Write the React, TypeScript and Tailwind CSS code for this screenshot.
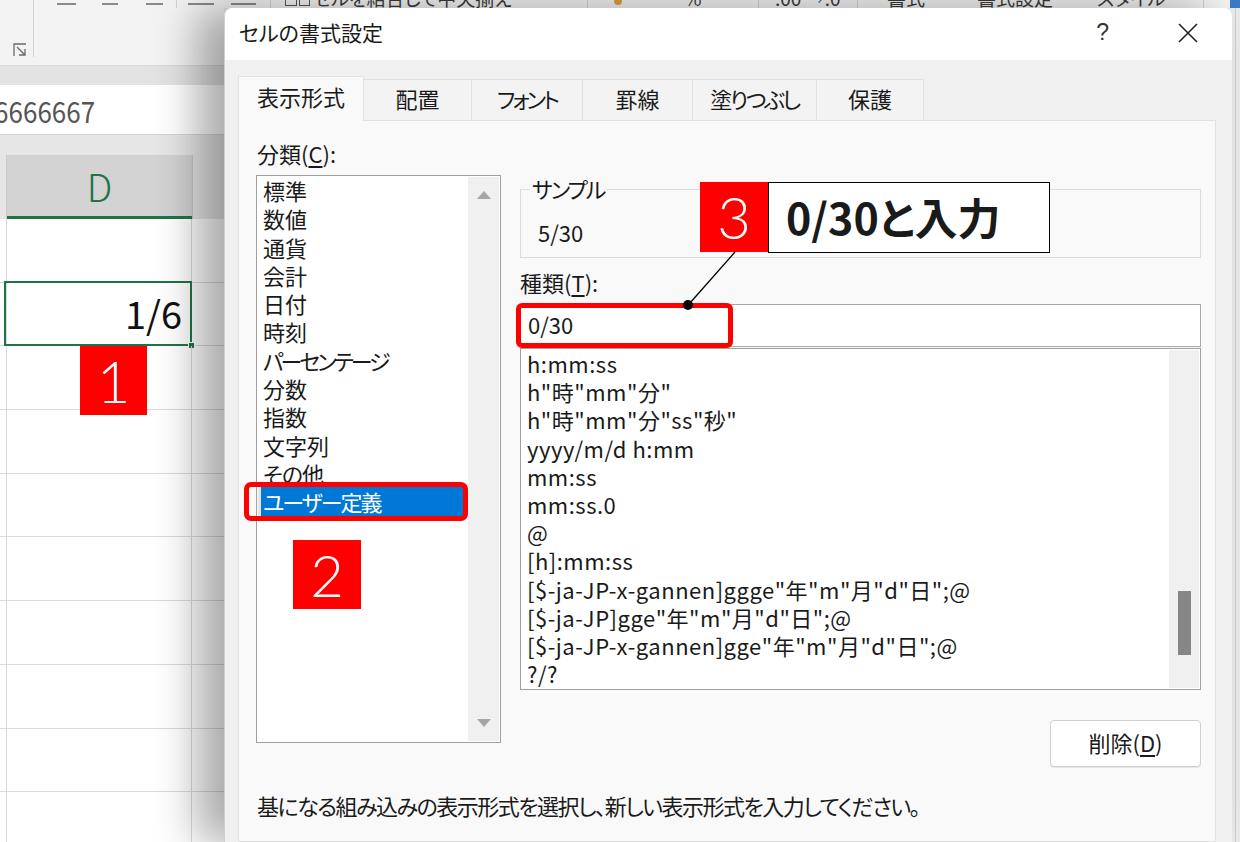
import React from "react";

const leftItems: { t: string; c: string }[] = [
  { t: "標準", c: "" },
  { t: "数値", c: "" },
  { t: "通貨", c: "" },
  { t: "会計", c: "" },
  { t: "日付", c: "" },
  { t: "時刻", c: "" },
  { t: "パーセンテージ", c: "tracking-[-3px]" },
  { t: "分数", c: "" },
  { t: "指数", c: "" },
  { t: "文字列", c: "" },
  { t: "その他", c: "tracking-[-1px]" },
];
const formats = [
  "h:mm:ss",
  'h"時"mm"分"',
  'h"時"mm"分"ss"秒"',
  "yyyy/m/d h:mm",
  "mm:ss",
  "mm:ss.0",
  "@",
  "[h]:mm:ss",
  '[$-ja-JP-x-gannen]ggge"年"m"月"d"日";@',
  '[$-ja-JP]gge"年"m"月"d"日";@',
  '[$-ja-JP-x-gannen]gge"年"m"月"d"日";@',
  "?/?",
];

const tabs: { label: string; w: string; c: string }[] = [
  { label: "配置", w: "w-[109px]", c: "" },
  { label: "フォント", w: "w-[112px]", c: "tracking-[-3px]" },
  { label: "罫線", w: "w-[111px]", c: "" },
  { label: "塗りつぶし", w: "w-[125px]", c: "tracking-[-2.5px]" },
  { label: "保護", w: "w-[108px]", c: "" },
];

function Sep() {
  return <div className="w-px h-full bg-[#d2d2d2] shrink-0" />;
}
function Under({ w }: { w: string }) {
  return (
    <div className={`${w} h-full flex items-start pt-[3px] shrink-0`}>
      <div className="w-full h-[2px] bg-[#8a8a8a]" />
    </div>
  );
}
function Sp({ w }: { w: string }) {
  return <div className={`${w} shrink-0`} />;
}
function RibText({ w, children }: { w: string; children: React.ReactNode }) {
  return (
    <div className={`${w} h-full flex items-end shrink-0 overflow-visible`}>
      <span className="text-[19px] leading-[20px] text-[#3a3a3a] whitespace-nowrap">{children}</span>
    </div>
  );
}

function TopStrip() {
  return (
    <div className="h-[8px] shrink-0 bg-[#f3f3f3] flex overflow-hidden">
      <Sp w="w-[33px]" />
      <Sep />
      <Sp w="w-[23px]" />
      <Under w="w-[19px]" />
      <Sp w="w-[26px]" />
      <Under w="w-[16px]" />
      <Sp w="w-[28px]" />
      <Under w="w-[17px]" />
      <Sp w="w-[13px]" />
      <Sep />
      <Sp w="w-[11px]" />
      <Under w="w-[26px]" />
      <Sp w="w-[17px]" />
      <Under w="w-[25px]" />
      <Sp w="w-[14px]" />
      <Sep />
      <Sp w="w-[14px]" />
      <div className="w-[25px] h-[6px] shrink-0 flex gap-[2px]">
        <div className="flex-1 border-x border-b border-[#555]" />
        <div className="flex-1 border-x border-b border-[#555]" />
      </div>
      <Sp w="w-[3px]" />
      <RibText w="w-[220px]">セルを結合して中央揃え</RibText>
      <Sp w="w-[54px]" />
      <Sep />
      <Sp w="w-[26px]" />
      <div className="w-[8px] h-[5px] bg-[#e0a040] rounded-b-sm shrink-0" />
      <Sp w="w-[62px]" />
      <RibText w="w-[14px]">%</RibText>
      <Sp w="w-[60px]" />
      <Sep />
      <Sp w="w-[16px]" />
      <RibText w="w-[60px]">
        <span>.00 </span>
        <span className="text-[#2f6fb5]">→</span>
        <span>.0</span>
      </RibText>
      <Sp w="w-[22px]" />
      <Sep />
      <Sp w="w-[29px]" />
      <RibText w="w-[38px]">書式</RibText>
      <Sp w="w-[52px]" />
      <RibText w="w-[63px]">書式設定</RibText>
      <Sp w="w-[57px]" />
      <RibText w="w-[53px]">スタイル</RibText>
      <Sp w="w-[53px]" />
      <Sep />
      <Sp w="w-[26px]" />
      <div className="w-[10px] h-full bg-[#3c7bc6] shrink-0" />
    </div>
  );
}

function ExcelLeft() {
  const rows = Array.from({ length: 10 });
  return (
    <div className="w-[224px] shrink-0 flex flex-col bg-white overflow-hidden">
      {/* ribbon remainder */}
      <div className="h-[58px] shrink-0 bg-[#f3f3f3] border-b border-[#d8d8d8] flex">
        <div className="w-[33px] h-[49px] flex items-end justify-start pl-[13px]">
          <svg width="14" height="14" viewBox="0 0 14 14" fill="none" stroke="#6b6b6b" strokeWidth="1.3">
            <path d="M1 13V1h12" />
            <path d="M4 4l8 8M12 6v6H6" />
          </svg>
        </div>
        <div className="w-px h-[49px] bg-[#d2d2d2]" />
        <div className="flex-1" />
      </div>
      <div className="h-[19px] shrink-0 bg-[#e3e3e3]" />
      {/* formula bar */}
      <div className="h-[50px] shrink-0 bg-white border-b border-[#d6d6d6] flex items-center overflow-hidden">
        <span className="-ml-[42px] text-[26px] leading-none text-[#555] whitespace-nowrap scale-y-[1.15]">0.16666667</span>
      </div>
      <div className="h-[20px] shrink-0 bg-[#e6e6e6]" />
      {/* column header */}
      <div className="h-[64px] shrink-0 flex">
        <div className="w-[7px] bg-[#e6e6e6] border-r border-[#c8c8c8]" />
        <div className="w-[185px] bg-[#d3d3d3] border-b-[3px] border-[#217346] flex items-center justify-center">
          <span className="text-[38px] font-light text-[#217346] leading-none">D</span>
        </div>
        <div className="flex-1 bg-[#e6e6e6] border-l border-[#c8c8c8]" />
      </div>
      {/* grid */}
      {rows.map((_, i) => (
        <div key={i} className="h-[63.7px] shrink-0 flex border-b border-[#dadada]">
          <div className="w-[7px] border-r border-[#dadada]" />
          <div className="w-[185px] border-r border-[#dadada] relative">
            {i === 1 && (
              <>
                <div className="absolute -left-[3px] -top-[2px] -right-[1px] -bottom-[1px] border-2 border-[#217346]" />
                <div className="absolute -right-[4px] -bottom-[4px] w-[7px] h-[7px] bg-[#217346] border border-white" />
                <div className="h-full flex items-center justify-end pr-[9px] pb-[2px]">
                  <span className="text-[38px] leading-none text-[#111]">1/6</span>
                </div>
              </>
            )}
          </div>
          <div className="flex-1" />
        </div>
      ))}
    </div>
  );
}

function Dialog() {
  return (
    <div className="w-[1008px] shrink-0 flex flex-col rounded-t-[8px] overflow-hidden relative z-10 border-l border-[#cfcfcf] shadow-[-26px_0_44px_rgba(0,0,0,0.34)]">
      {/* title bar */}
      <div className="h-[52px] shrink-0 bg-white flex items-center pl-[14px] pb-[3px]">
        <span className="text-[21px] text-[#1a1a1a] leading-none">セルの書式設定</span>
        <div className="flex-1" />
        <span className="text-[23px] text-[#333] leading-none font-['Liberation_Sans',sans-serif] mr-[68px]">?</span>
        <svg width="22" height="22" viewBox="0 0 22 22" className="mr-[33px]">
          <path d="M2 2L20 20M20 2L2 20" stroke="#222" strokeWidth="1.6" />
        </svg>
      </div>
      {/* body */}
      <div className="flex-1 bg-[#f0f0f0] pt-[16px] pl-[13px] pr-[16px] flex flex-col">
        {/* tabs */}
        <div className="h-[44px] shrink-0 flex items-end">
          <div className="w-[126px] h-[45px] -mb-px relative z-10 bg-[#f9f9f9] border border-b-0 border-[#e1e1e1] flex items-center justify-center text-[22px] text-[#1a1a1a] pb-[5px]">
            表示形式
          </div>
          {tabs.map((t) => (
            <div
              key={t.label}
              className={`${t.w} h-[41px] -ml-px bg-[#f3f3f3] border border-b-0 border-[#e1e1e1] flex items-center justify-center text-[22px] text-[#1a1a1a] pb-[4px]`}
            >
              <span className={t.c}>{t.label}</span>
            </div>
          ))}
        </div>
        {/* panel */}
        <div className="flex-1 bg-[#f9f9f9] border border-[#e1e1e1] flex flex-col">
          <div className="flex gap-[19px] pl-[17px] pt-[20px]">
            {/* left */}
            <div className="w-[245px] flex flex-col">
              <div className="h-[30px] leading-[30px] text-[22px] text-[#1a1a1a] pl-px -translate-y-[3px]">
                分類(<span className="underline underline-offset-[3px]">C</span>):
              </div>
              <div className="mt-[4px] h-[568px] bg-white border border-[#a0a0a0] flex">
                <div className="flex-1 pl-[1px] pr-[4px] flex flex-col">
                  {leftItems.map((it) => (
                    <div key={it.t} className={`h-[28.3px] leading-[28.3px] text-[22px] text-[#1a1a1a] pl-[5px] whitespace-nowrap ${it.c}`}>
                      {it.t}
                    </div>
                  ))}
                  <div className="h-[28.3px] flex">
                    <div className="w-[3px] bg-[#e4e4e4]" />
                    <div className="flex-1 bg-[#0078d7] leading-[28.3px] text-[22px] text-white pl-[2px] whitespace-nowrap tracking-[-2px]">
                      ユーザー定義
                    </div>
                  </div>
                </div>
                <div className="w-[31px] my-[1px] mr-[1px] bg-[#f0f0f0] flex flex-col items-center justify-between py-[14px]">
                  <svg width="14" height="8" viewBox="0 0 14 8">
                    <path d="M7 0L14 8H0Z" fill="#a6a6a6" />
                  </svg>
                  <svg width="14" height="8" viewBox="0 0 14 8">
                    <path d="M0 0H14L7 8Z" fill="#a6a6a6" />
                  </svg>
                </div>
              </div>
            </div>
            {/* right */}
            <div className="w-[681px] flex flex-col pt-[38px]">
              <fieldset className="border border-[#dcdcdc] px-[9px] pb-[8px] m-0 min-w-0">
                <legend className="px-[2px] text-[22px] leading-[20px] text-[#1a1a1a] tracking-[-2px] -translate-y-[1px]">サンプル</legend>
                <div className="mt-[18px] h-[30px] leading-[30px] text-[22px] text-[#1a1a1a] ml-[8px] mb-[2px]">5/30</div>
              </fieldset>
              <div className="mt-[12px] h-[30px] leading-[30px] text-[22px] text-[#1a1a1a] -translate-y-[3px]">
                種類(<span className="underline underline-offset-[3px]">T</span>):
              </div>
              <div className="mt-[4px] h-[43px] bg-white border border-[#a8a8a8] flex items-center pl-[7px] pb-[3px] text-[22px] text-[#1a1a1a]">
                0/30
              </div>
              <div className="mt-[1px] h-[342px] bg-white border border-[#a0a0a0] flex">
                <div className="flex-1 pl-[6px] flex flex-col overflow-hidden">
                  {formats.map((f) => (
                    <div key={f} className="h-[28.2px] leading-[28.2px] text-[22px] text-[#1a1a1a] whitespace-nowrap tracking-[0.5px]">
                      {f}
                    </div>
                  ))}
                </div>
                <div className="w-[30px] my-[1px] mr-[1px] bg-[#f0f0f0] flex flex-col items-center pt-[241px]">
                  <div className="w-[13px] h-[64px] bg-[#868686]" />
                </div>
              </div>
              <button className="mt-[30px] self-end w-[151px] h-[47px] bg-white border border-[#d0d0d0] rounded-[4px] text-[22px] text-[#1a1a1a] pb-[3px] shadow-[0_1px_0_rgba(0,0,0,0.08)]">
                削除(<span className="underline underline-offset-[3px]">D</span>)
              </button>
            </div>
          </div>
          <div className="mt-[23px] pl-[18px] h-[30px] leading-[30px] text-[22px] text-[#1a1a1a] whitespace-nowrap tracking-[-1.5px]">
            基になる組み込みの表示形式を選択し、新しい表示形式を入力してください。
          </div>
        </div>
      </div>
    </div>
  );
}

function Badge({ n, cls }: { n: string; cls: string }) {
  return (
    <div className={`absolute ${cls} bg-[#ff0000] flex items-center justify-center z-20`}>
      <span className="font-['Lato',sans-serif] font-light text-[58px] leading-none text-white">{n}</span>
    </div>
  );
}

export default function App() {
  return (
    <div className="relative w-[1240px] h-[842px] overflow-hidden bg-[#e8e8e8] flex flex-col font-['Noto_Sans_CJK_JP','Noto_Sans',sans-serif] [font-feature-settings:'palt']">
      <TopStrip />
      <div className="flex flex-1 min-h-0">
        <ExcelLeft />
        <Dialog />
        <div className="flex-1 bg-[#ebebeb] flex">
          <div className="w-[3px]" />
          <div className="w-px bg-[#cfcfcf]" />
        </div>
      </div>

      {/* annotations */}
      <Badge n="1" cls="left-[80px] top-[346px] w-[67px] h-[69px]" />
      <Badge n="2" cls="left-[293px] top-[540px] w-[68px] h-[69px]" />
      <Badge n="3" cls="left-[700px] top-[182px] w-[68px] h-[70px]" />
      <div className="absolute left-[768px] top-[182px] w-[282px] h-[71px] bg-white border-[1.5px] border-black z-20 flex items-center pl-[17px] pb-[2px]">
        <span className="text-[43px] font-bold leading-none text-[#1a1a1a] whitespace-nowrap">0/30と入力</span>
      </div>
      <div className="absolute left-[244px] top-[482px] w-[224px] h-[39px] border-[5px] border-[#ff0000] rounded-[7px] z-20" />
      <div className="absolute left-[516px] top-[303px] w-[217px] h-[45px] border-[5px] border-[#ff0000] rounded-[6px] z-20" />
      <svg className="absolute left-0 top-0 z-20 pointer-events-none" width="1240" height="842">
        <line x1="735" y1="252" x2="690" y2="303" stroke="#000" strokeWidth="1.3" />
        <circle cx="688" cy="305" r="5" fill="#000" />
      </svg>
    </div>
  );
}
